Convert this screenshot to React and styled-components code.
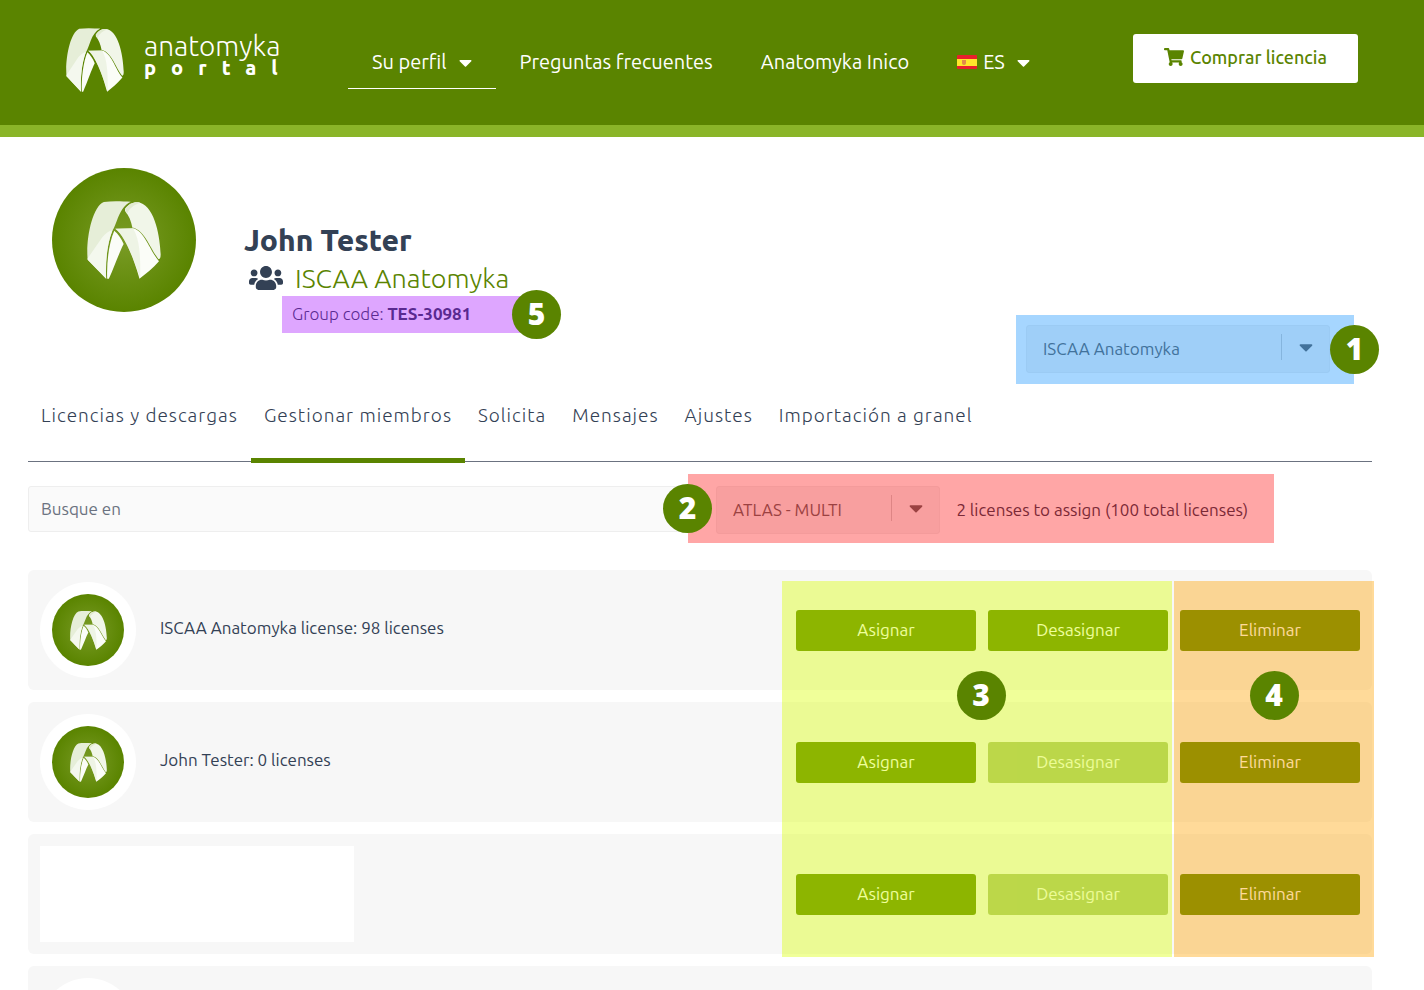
import { useState } from "react";
import { FaCaretDown, FaShoppingCart, FaUsers } from "react-icons/fa";
import styled, { createGlobalStyle } from "styled-components";

const members = [
    { id: 1, label: "ISCAA Anatomyka license: 98 licenses", canUnassign: true },
    { id: 2, label: "John Tester: 0 licenses", canUnassign: false },
    { id: 3, hidden: true, canUnassign: false },
    { id: 4, label: "", canUnassign: false },
]

const tabs = [
    "Licencias y descargas",
    "Gestionar miembros",
    "Solicita",
    "Mensajes",
    "Ajustes",
    "Importación a granel",
]

const Mark = ({ className }) => (
    <svg className={className} viewBox="0 0 220 234" preserveAspectRatio="none" aria-hidden="true">
        {/* left band and its lower fold */}
        <path fill="#e6eed8" d="M50 3C75 -1 105 1 130 2C92 22 92 66 74 92C60 130 55 180 57 233L2 176C-4 120 14 18 50 3Z" />
        <path fill="#f4f8ee" d="M2 172L46 108C56 98 64 90 76 88C60 126 54 180 57 233L2 176Z" />
        {/* right band */}
        <path fill="#f1f6e9" d="M113 24C126 6 142 1 158 5C204 20 217 112 219 160C219 172 216 176 212 174C188 142 172 90 138 80L135 80C131 60 125 44 113 30Z" />
        <path fill="#e2ebd2" d="M113 24C126 6 142 1 158 5C138 12 126 22 119 38Z" />
        {/* front legs */}
        <path fill="#fbfdf8" d="M81 89C92 98 102 112 109 129C96 154 82 196 65 233L60 233C58 184 65 126 81 89Z" />
        <path fill="#fbfdf8" d="M84 83L137 82C172 91 186 148 214 181C196 202 176 218 156 233C144 190 116 106 84 83Z" />
        <path fill="#e6eed8" d="M84 83L137 82C152 110 160 140 158 232C144 190 116 106 84 83Z" opacity="0.6" />
    </svg>
)

const Flag = () => (
    <svg width="20" height="14" viewBox="0 0 20 14" aria-hidden="true">
        <rect width="20" height="14" rx="1" fill="#e8202c" />
        <rect y="4" width="20" height="7" fill="#ffe62b" />
        <path d="M5 5h4v3q0 2-2 2t-2-2z" fill="#e08a4a" />
    </svg>
)

const Dropdown = ({ label, options }) => (
    <SelectBox>
        <Select aria-label={label}>
            {options.map((option) => <option key={option}>{option}</option>)}
        </Select>
        <Arrow><FaCaretDown size={22} /></Arrow>
    </SelectBox>
)

const Avatar = ({ small }) => (
    <Disc $small={small}><AvatarMark $small={small} /></Disc>
)

export default function App() {
    const [tab, setTab] = useState("Gestionar miembros")
    const [search, setSearch] = useState("")

    return (
        <>
            <GlobalStyle />
            <Header>
                <Logo href="#">
                    <LogoMark />
                    <LogoText>
                        <span>anatomyka</span>
                        <strong>portal</strong>
                    </LogoText>
                </Logo>
                <Nav>
                    <NavLink href="#" $active>Su perfil <NavCaret /></NavLink>
                    <NavLink href="#">Preguntas frecuentes</NavLink>
                    <NavLink href="#">Anatomyka Inico</NavLink>
                    <NavLink href="#"><Language><Flag /> ES</Language> <NavCaret /></NavLink>
                </Nav>
                <BuyButton><FaShoppingCart size={20} />Comprar licencia</BuyButton>
            </Header>
            <Main>
                <Profile>
                    <Avatar />
                    <Person>
                        <Name>John Tester</Name>
                        <Group><FaUsers size={34} /><a href="#">ISCAA Anatomyka</a></Group>
                        <GroupCode>
                            Group code: <b>TES-30981</b>
                            <Overlay $tint="161, 0, 255" />
                            <Badge $side="right">5</Badge>
                        </GroupCode>
                    </Person>
                    <GroupPicker>
                        <Dropdown label="Grupo" options={["ISCAA Anatomyka"]} />
                        <Overlay $tint="0, 138, 255" />
                        <Badge $side="right">1</Badge>
                    </GroupPicker>
                </Profile>
                <Tabs>
                    {tabs.map((name) => (
                        <Tab key={name} $active={name === tab} onClick={() => setTab(name)}>{name}</Tab>
                    ))}
                </Tabs>
                <Toolbar>
                    <Search
                        aria-label="Busque en"
                        placeholder="Busque en"
                        value={search}
                        onChange={(e) => setSearch(e.target.value)}
                    />
                    <LicensePicker>
                        <Dropdown label="Licencia" options={["ATLAS - MULTI"]} />
                        <span>2 licenses to assign (100 total licenses)</span>
                        <Overlay $tint="255, 0, 0" />
                        <Badge $side="left">2</Badge>
                    </LicensePicker>
                </Toolbar>
                <Members>
                    {members.map((member) => (
                        <Member key={member.id}>
                            {member.hidden ? <Redacted /> : (
                                <>
                                    <Ring><Avatar small /></Ring>
                                    <MemberName>{member.label}</MemberName>
                                </>
                            )}
                            <Actions>
                                <Button>Asignar</Button>
                                <Button disabled={!member.canUnassign}>Desasignar</Button>
                                <Button>Eliminar</Button>
                            </Actions>
                        </Member>
                    ))}
                    <ColumnOverlay $tint="218, 255, 0" $right={200} $width={390} $indent={8}>
                        <Badge>3</Badge>
                    </ColumnOverlay>
                    <ColumnOverlay $tint="255, 162, 0" $right={-2} $width={200}>
                        <Badge>4</Badge>
                    </ColumnOverlay>
                </Members>
            </Main>
        </>
    )
}

const GlobalStyle = createGlobalStyle`
    * {
        box-sizing: border-box;
    }

    body {
        margin: 0;
        background: #fff;
        color: #334155;
        font-family: Ubuntu, "Noto Sans", "Open Sans", sans-serif;
        font-size: 17px;
        line-height: 24px;
    }

    a {
        color: inherit;
        text-decoration: none;
    }

    b {
        font-weight: 700;
    }

    button, input, select {
        font: inherit;
    }
`

const Header = styled.header`
    display: flex;
    align-items: flex-start;
    height: 137px;
    padding: 28px 66px 0;
    background: #5a8400;
    border-bottom: 12px solid #8ab528;
    color: #fff;
`

const Logo = styled.a`
    display: flex;
    gap: 20px;
`

const LogoMark = styled(Mark)`
    width: 58px;
    height: 64px;
`

const LogoText = styled.div`
    display: flex;
    flex-direction: column;
    padding-top: 4px;
    width: 138px;
    font-size: 28px;
    font-weight: 300;
    line-height: 28px;

    strong {
        font-size: 20px;
        font-weight: 800;
        line-height: 16px;
        letter-spacing: 15px;
    }
`

const Nav = styled.nav`
    display: flex;
    margin-left: 66px;
    font-size: 20px;
`

const NavLink = styled.a`
    display: flex;
    align-items: center;
    gap: 12px;
    height: 61px;
    padding: 8px 24px 0;
    border-bottom: 1px solid ${({ $active }) => ($active ? "#fff" : "transparent")};
`

const NavCaret = styled(FaCaretDown)`
    width: 13px;
    height: 21px;
`

const Language = styled.span`
    display: flex;
    align-items: center;
    gap: 6px;
`

const BuyButton = styled.button`
    display: flex;
    align-items: center;
    justify-content: center;
    gap: 6px;
    min-width: 225px;
    height: 49px;
    margin: 6px 0 0 auto;
    padding: 0 24px 3px;
    border: none;
    border-radius: 3px;
    background: #fff;
    color: #5a8400;
    font-size: 18px;
    font-weight: 500;
`

const Main = styled.main`
    padding: 31px 52px 24px 28px;
`

const Profile = styled.section`
    display: flex;
    align-items: flex-start;
    padding: 0 24px;
`

const Disc = styled.div`
    display: flex;
    align-items: center;
    justify-content: center;
    width: ${({ $small }) => ($small ? 72 : 144)}px;
    height: ${({ $small }) => ($small ? 72 : 144)}px;
    border-radius: 50%;
    background: radial-gradient(circle, #7a9c26 0%, #5a8400 70%);
`

const AvatarMark = styled(Mark)`
    width: ${({ $small }) => ($small ? 37 : 74)}px;
    height: ${({ $small }) => ($small ? 39 : 78)}px;
`

const Person = styled.div`
    margin-left: 48px;
    padding-top: 52px;
`

const Name = styled.h1`
    margin: 0;
    font-size: 30px;
    font-weight: 800;
    line-height: 40px;
`

const Group = styled.div`
    display: flex;
    align-items: center;
    gap: 12px;
    padding-left: 5px;
    font-size: 27px;
    font-weight: 300;
    line-height: 36px;

    a {
        color: #5a8400;
    }
`

const GroupCode = styled.div`
    position: relative;
    width: 254px;
    height: 37px;
    margin-left: 38px;
    padding-left: 10px;
    font-weight: 300;
    line-height: 35px;
`

const Overlay = styled.div`
    position: absolute;
    inset: 0;
    background: rgba(${({ $tint }) => $tint}, 0.35);
    pointer-events: none;
`

const ColumnOverlay = styled.div`
    position: absolute;
    top: 11px;
    right: ${({ $right }) => $right}px;
    display: flex;
    justify-content: center;
    width: ${({ $width }) => $width}px;
    height: 376px;
    padding: 90px 0 0 ${({ $indent = 0 }) => $indent}px;
    background: rgba(${({ $tint }) => $tint}, 0.4);
    pointer-events: none;
`

const Badge = styled.span`
    position: ${({ $side }) => ($side ? "absolute" : "static")};
    top: calc(50% - 25px);
    ${({ $side }) => $side && `${$side}: -25px;`}
    width: 49px;
    height: 49px;
    border-radius: 50%;
    background: #5a8400;
    color: #fff;
    font-family: "Open Sans", sans-serif;
    font-size: 30px;
    font-weight: 800;
    line-height: 48px;
    text-align: center;
`

const GroupPicker = styled.div`
    position: relative;
    width: 338px;
    margin: 147px -6px 0 auto;
    padding: 10px 24px 11px 10px;
`

const SelectBox = styled.div`
    position: relative;
    display: flex;
    flex: 1;
`

const Select = styled.select`
    appearance: none;
    width: 100%;
    height: 48px;
    padding: 0 60px 0 16px;
    border: 1px solid #eee;
    border-radius: 3px;
    background: #f4f4f4;
    color: #666;
`

const Arrow = styled.span`
    position: absolute;
    top: 9px;
    right: 13px;
    display: flex;
    align-items: center;
    height: 26px;
    padding-left: 13px;
    border-left: 1px solid #ccc;
    color: #666;
    pointer-events: none;
`

const Tabs = styled.nav`
    display: flex;
    border-bottom: 1px solid #6b7280;
`

const Tab = styled.button`
    height: 79px;
    margin-bottom: -2px;
    padding: 0 13px 12px;
    border: none;
    border-bottom: 5px solid ${({ $active }) => ($active ? "#5a8400" : "transparent")};
    background: none;
    color: #334155;
    font-size: 19px;
    font-weight: 300;
    letter-spacing: 1px;
    cursor: pointer;
`

const Toolbar = styled.div`
    display: flex;
    align-items: center;
    height: 69px;
    margin-top: 12px;
`

const Search = styled.input`
    flex: 1;
    height: 46px;
    padding: 0 12px;
    border: 1px solid #eee;
    border-radius: 3px;
    background: #fafafa;

    &::placeholder {
        color: #6b7280;
        opacity: 1;
    }
`

const LicensePicker = styled.div`
    position: relative;
    display: flex;
    align-items: center;
    gap: 16px;
    width: 586px;
    height: 69px;
    margin-right: 98px;
    padding: 2px 26px 0 28px;
`

const Members = styled.ul`
    position: relative;
    display: flex;
    flex-direction: column;
    gap: 12px;
    margin: 27px 0 0;
    padding: 0;
    list-style: none;
`

const Member = styled.li`
    display: flex;
    align-items: center;
    height: 120px;
    padding: 0 12px;
    border-radius: 6px;
    background: #f7f7f7;
`

const Ring = styled.div`
    padding: 12px;
    border-radius: 50%;
    background: #fff;
`

const MemberName = styled.span`
    margin-left: 24px;
    padding-bottom: 5px;
`

const Redacted = styled.div`
    width: 314px;
    height: 96px;
    background: #fff;
`

const Actions = styled.div`
    display: flex;
    gap: 12px;
    margin-left: auto;
`

const Button = styled.button`
    width: 180px;
    height: 41px;
    border: none;
    border-radius: 3px;
    background: #5a8400;
    color: #fff;
    cursor: pointer;

    &:disabled {
        opacity: 0.5;
        cursor: default;
    }
`
